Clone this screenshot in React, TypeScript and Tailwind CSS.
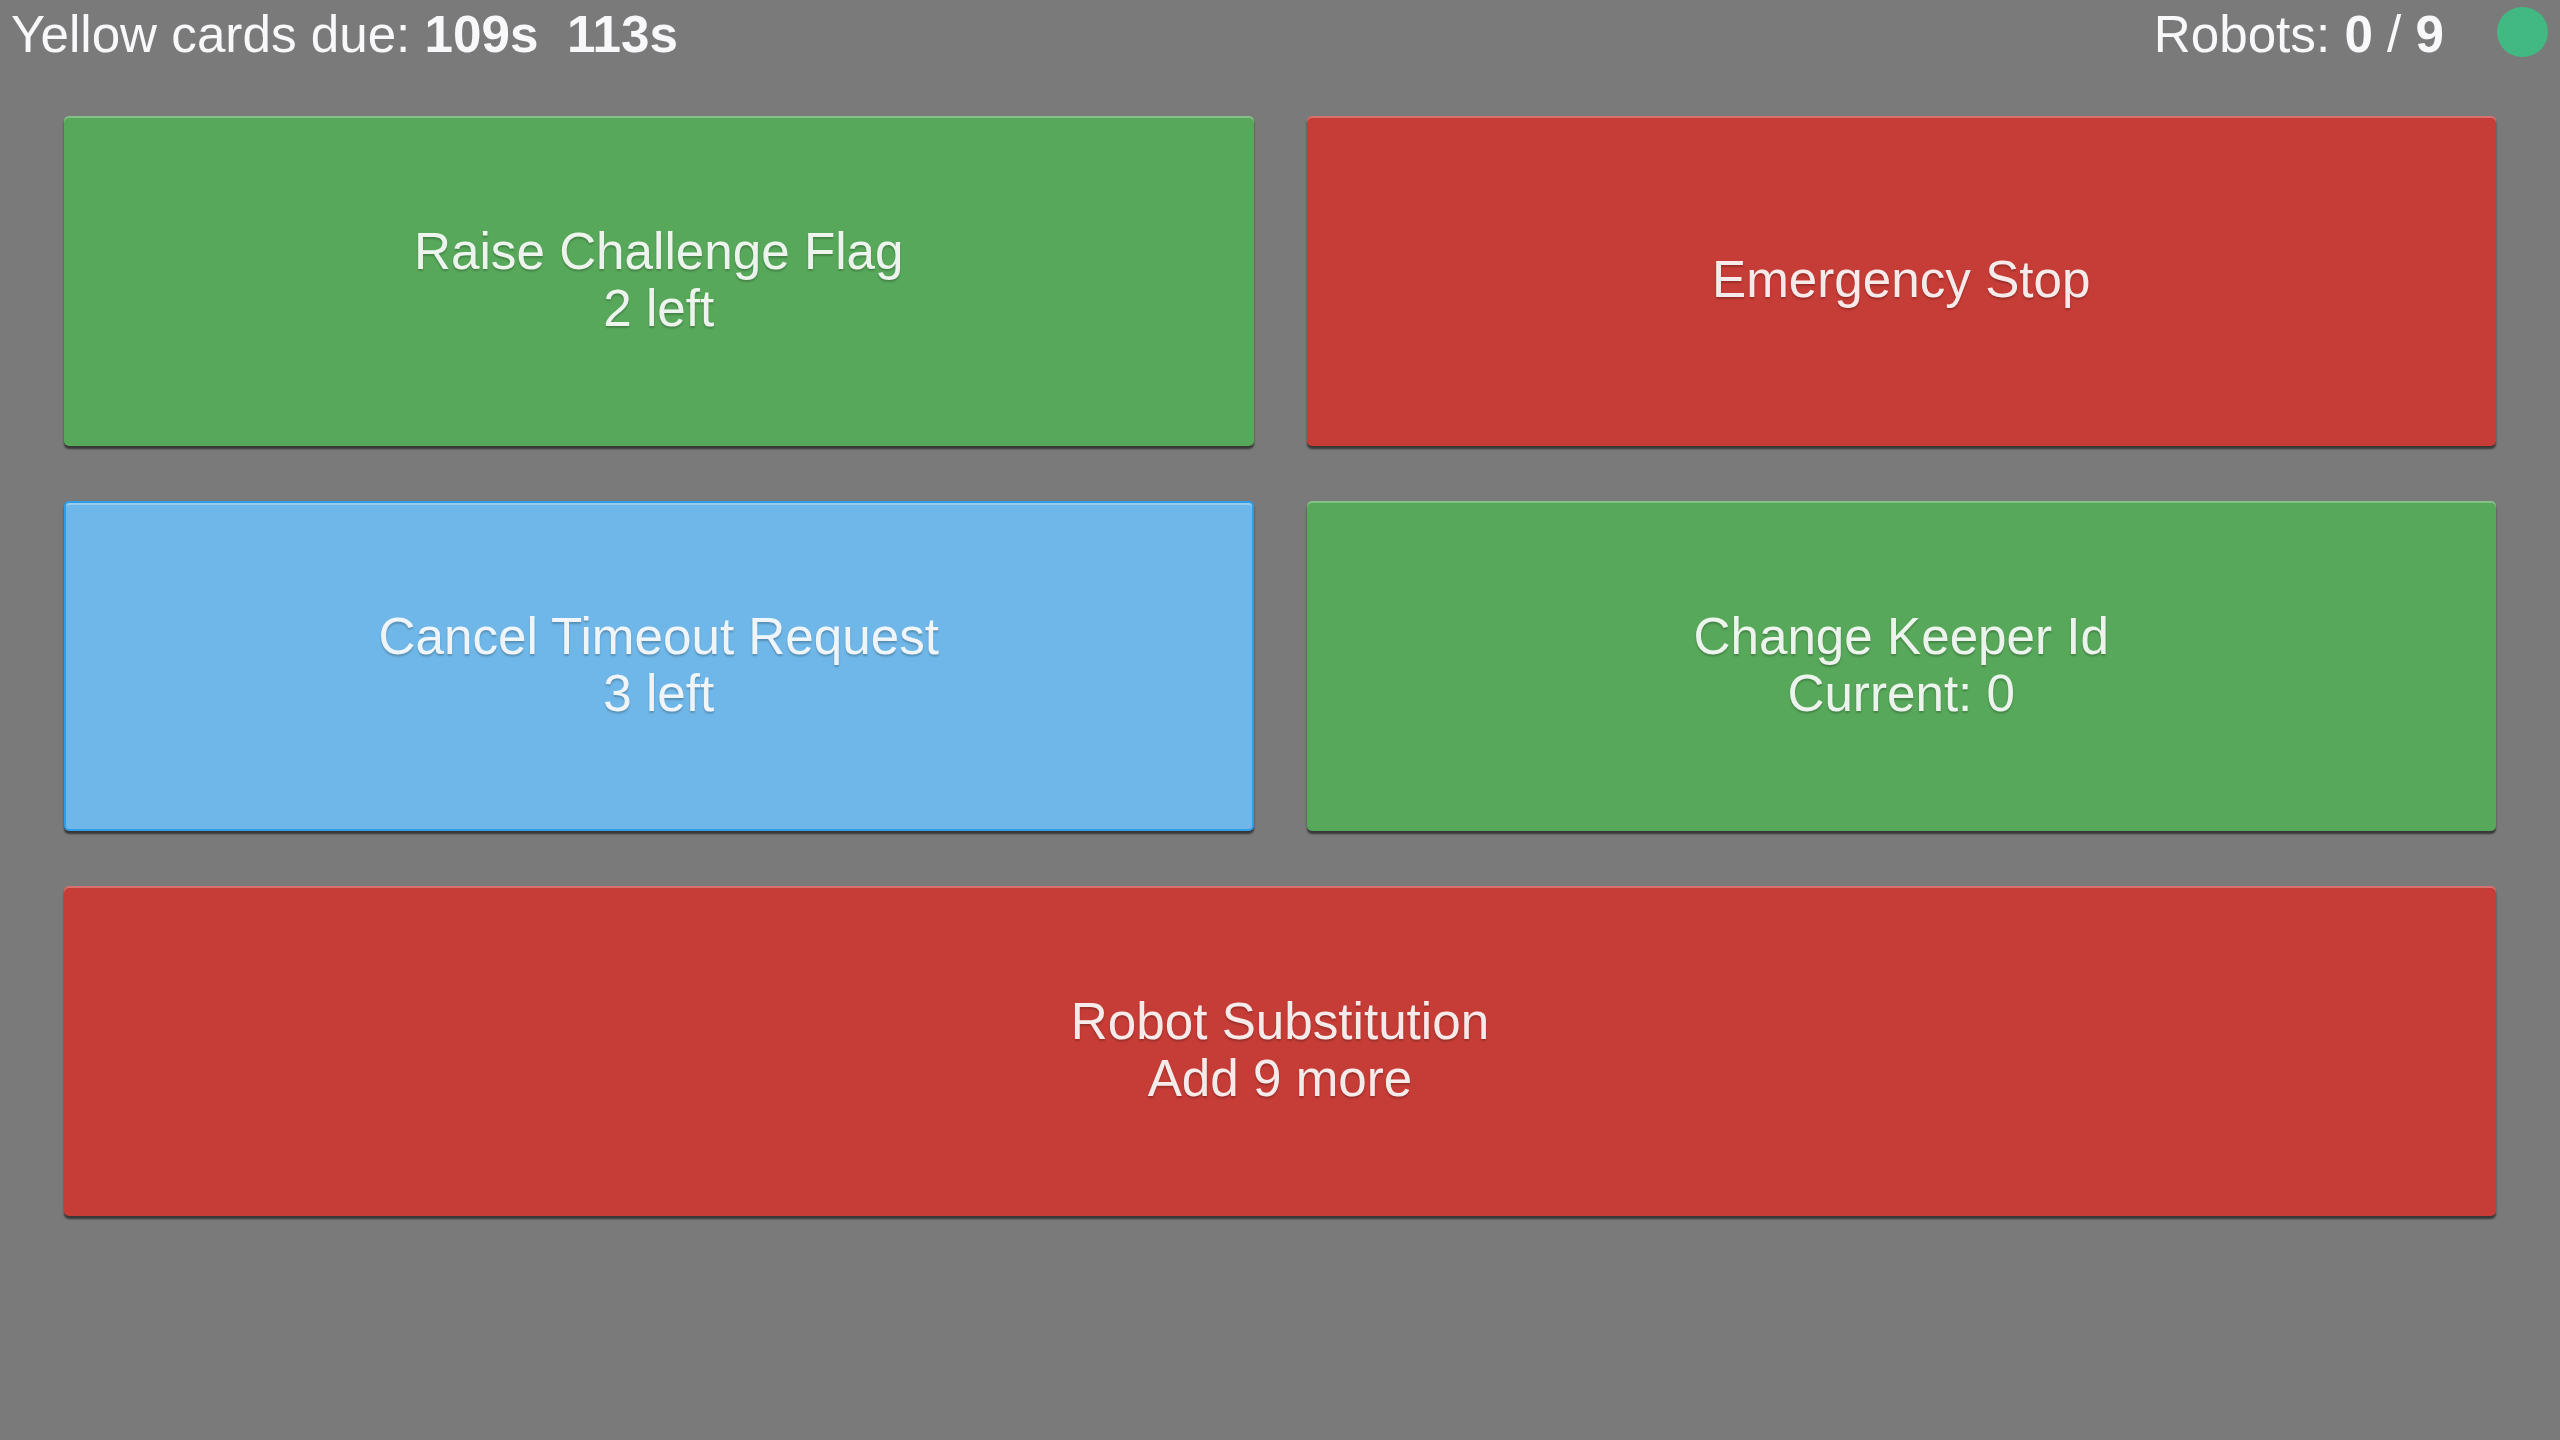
import React from 'react';

type Btn = {
  lines: string[];
  color: 'green' | 'red' | 'blue';
  wide?: boolean;
};

const colorClass = {
  green: 'bg-[#57a85a]',
  red: 'bg-[#c63c36]',
  blue: 'bg-[#6fb7e8] border-2 border-[#2f9ce6]',
};

function ControlButton({ lines, color, wide }: Btn) {
  return (
    <button
      className={`${colorClass[color]} ${wide ? 'col-span-2' : ''} h-[330px] pb-[3px] rounded-[5px] flex flex-col items-center justify-center text-[51.2px] leading-[57px] text-white/90 [text-shadow:0_2px_2px_rgba(0,0,0,0.22)] shadow-[inset_0_2px_0_rgba(255,255,255,0.28),0_3px_2px_rgba(0,0,0,0.55)]`}
    >
      {lines.map((l) => (
        <span key={l}>{l}</span>
      ))}
    </button>
  );
}

export default function App() {
  const buttons: Btn[] = [
    { lines: ['Raise Challenge Flag', '2 left'], color: 'green' },
    { lines: ['Emergency Stop'], color: 'red' },
    { lines: ['Cancel Timeout Request', '3 left'], color: 'blue' },
    { lines: ['Change Keeper Id', 'Current: 0'], color: 'green' },
    { lines: ['Robot Substitution', 'Add 9 more'], color: 'red', wide: true },
  ];

  return (
    <div className="min-h-[1440px] bg-[#797a79] font-['Liberation_Sans',Arial,sans-serif] text-[#f8f8fb]">
      {/* Header */}
      <div className="flex items-center justify-between pl-[11px] pr-[12px] pt-[6px] h-[64px]">
        <div className="font-['Liberation_Sans_Narrow','Liberation_Sans',sans-serif] text-[51.2px] leading-[58px]">
          Yellow cards due: <b>109s</b>&nbsp; <b>113s</b>
        </div>
        <div className="flex items-center gap-[53px]">
          <div className="text-[51.2px] leading-[58px]">
            Robots: <b>0</b> / <b>9</b>
          </div>
          <div className="w-[51px] h-[50px] rounded-full bg-[#42b983] mb-[6px]" />
        </div>
      </div>

      {/* Controls */}
      <div className="grid grid-cols-2 gap-x-[53px] gap-y-[55px] px-[64px] pt-[52px]">
        {buttons.map((b) => (
          <ControlButton key={b.lines[0]} {...b} />
        ))}
      </div>
    </div>
  );
}
